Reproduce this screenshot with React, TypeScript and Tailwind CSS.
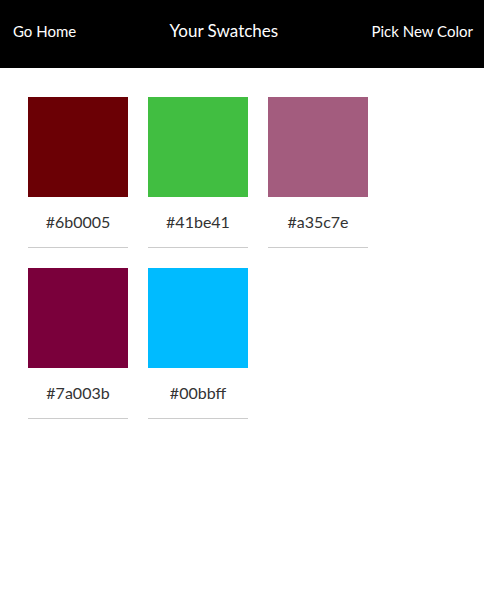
const swatches = ["#6b0005", "#41be41", "#a35c7e", "#7a003b", "#00bbff"];

const Swatch = ({ color }: { color: string }) => {
  return (
    <div className="w-[100px] flex flex-col">
      <div className="w-[100px] h-[100px]" style={{ backgroundColor: color }} />
      <p className="py-4 text-center text-[16px] leading-[18px] text-[#333] border-b border-[#cccccc]">
        {color}
      </p>
    </div>
  );
};

export default function App() {
  return (
    <div className="min-h-[600px] bg-white font-['Lato',sans-serif]">
      <header className="h-[68px] bg-black text-white flex justify-between items-start pt-[19px] pl-[13px] pr-[11px]">
        <a className="text-[15px] leading-6">Go Home</a>
        <h1 className="text-[17px] leading-6">Your Swatches</h1>
        <a className="text-[15px] leading-6">Pick New Color</a>
      </header>
      <main className="pl-7 pt-[29px] flex flex-wrap gap-5 w-[400px]">
        {swatches.map((c) => (
          <Swatch key={c} color={c} />
        ))}
      </main>
    </div>
  );
}
